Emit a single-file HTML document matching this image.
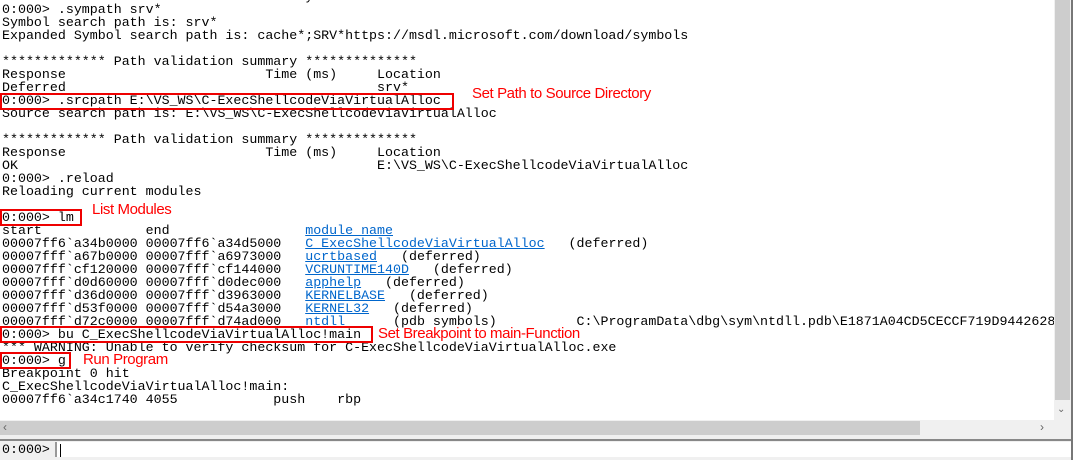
<!DOCTYPE html>
<html><head><meta charset="utf-8"><style>
body{margin:0;width:1073px;height:460px;overflow:hidden;background:#fff;position:relative;font-family:"Liberation Mono",monospace}
pre{position:absolute;left:2px;top:-10px;margin:0;font-family:"Liberation Mono",monospace;font-size:13.3px;line-height:13px;color:#000;white-space:pre}
a{color:#0066cc;text-decoration:underline}
.box{position:absolute;border:2px solid #e00;box-sizing:border-box}
.ann{position:absolute;color:#f00;font-family:"Liberation Sans",sans-serif;font-size:15px;letter-spacing:-0.4px}
</style></head><body>
<pre>*************** Path validation summary ***************
0:000&gt; .sympath srv*
Symbol search path is: srv*
Expanded Symbol search path is: cache*;SRV*https://msdl.microsoft.com/download/symbols

************* Path validation summary **************
Response                         Time (ms)     Location
Deferred                                       srv*
0:000&gt; .srcpath E:\VS_WS\C-ExecShellcodeViaVirtualAlloc
Source search path is: E:\VS_WS\C-ExecShellcodeViaVirtualAlloc

************* Path validation summary **************
Response                         Time (ms)     Location
OK                                             E:\VS_WS\C-ExecShellcodeViaVirtualAlloc
0:000&gt; .reload
Reloading current modules

0:000&gt; lm
start             end                 <a>module name</a>
00007ff6`a34b0000 00007ff6`a34d5000   <a>C_ExecShellcodeViaVirtualAlloc</a>   (deferred)
00007fff`a67b0000 00007fff`a6973000   <a>ucrtbased</a>   (deferred)
00007fff`cf120000 00007fff`cf144000   <a>VCRUNTIME140D</a>   (deferred)
00007fff`d0d60000 00007fff`d0dec000   <a>apphelp</a>   (deferred)
00007fff`d36d0000 00007fff`d3963000   <a>KERNELBASE</a>   (deferred)
00007fff`d53f0000 00007fff`d54a3000   <a>KERNEL32</a>   (deferred)
00007fff`d72c0000 00007fff`d74ad000   <a>ntdll</a>      (pdb symbols)          C:\ProgramData\dbg\sym\ntdll.pdb\E1871A04CD5CECCF719D9442628
0:000&gt; bu C_ExecShellcodeViaVirtualAlloc!main
*** WARNING: Unable to verify checksum for C-ExecShellcodeViaVirtualAlloc.exe
0:000&gt; g
Breakpoint 0 hit
C_ExecShellcodeViaVirtualAlloc!main:
00007ff6`a34c1740 4055            push    rbp
</pre>
<div class="box" style="left:0;top:93px;width:454px;height:17px"></div>
<div class="ann" style="left:472px;top:85px">Set Path to Source Directory</div>
<div class="box" style="left:0;top:209px;width:82px;height:17px"></div>
<div class="ann" style="left:92px;top:201px">List Modules</div>
<div class="box" style="left:0;top:326px;width:373px;height:17px"></div>
<div class="ann" style="left:378px;top:325px">Set Breakpoint to main-Function</div>
<div class="box" style="left:0;top:352px;width:71px;height:17px"></div>
<div class="ann" style="left:83px;top:351px">Run Program</div>
<div style="position:absolute;left:1054px;top:0;width:17px;height:420px;background:#f0f0f0"></div>
<div style="position:absolute;left:1055px;top:0;width:15px;height:400px;background:#cdcdcd"></div>
<div style="position:absolute;left:1057px;top:404px;font:10px 'Liberation Sans',sans-serif;color:#666">&#8964;</div>
<div style="position:absolute;left:1071px;top:0;width:2px;height:460px;background:#777"></div>
<div style="position:absolute;left:0;top:420px;width:1071px;height:16px;background:#f0f0f0"></div>
<div style="position:absolute;left:0;top:421px;width:920px;height:14px;background:#cdcdcd"></div>
<div style="position:absolute;left:3px;top:420px;font:12px 'Liberation Sans',sans-serif;color:#666">&lsaquo;</div>
<div style="position:absolute;left:1040px;top:420px;font:12px 'Liberation Sans',sans-serif;color:#666">&rsaquo;</div>
<div style="position:absolute;left:0;top:436px;width:1071px;height:24px;background:#f0f0f0"></div>
<div style="position:absolute;left:0;top:439px;width:1071px;height:2px;background:#888"></div>
<div style="position:absolute;left:55px;top:442px;width:1014px;height:15px;background:#fff;border-left:2px solid #999"></div>
<div style="position:absolute;left:2px;top:442px;font:13.3px 'Liberation Mono',monospace;color:#000">0:000&gt;</div>
<div style="position:absolute;left:60px;top:444px;width:1px;height:13px;background:#000"></div>
</body></html>
